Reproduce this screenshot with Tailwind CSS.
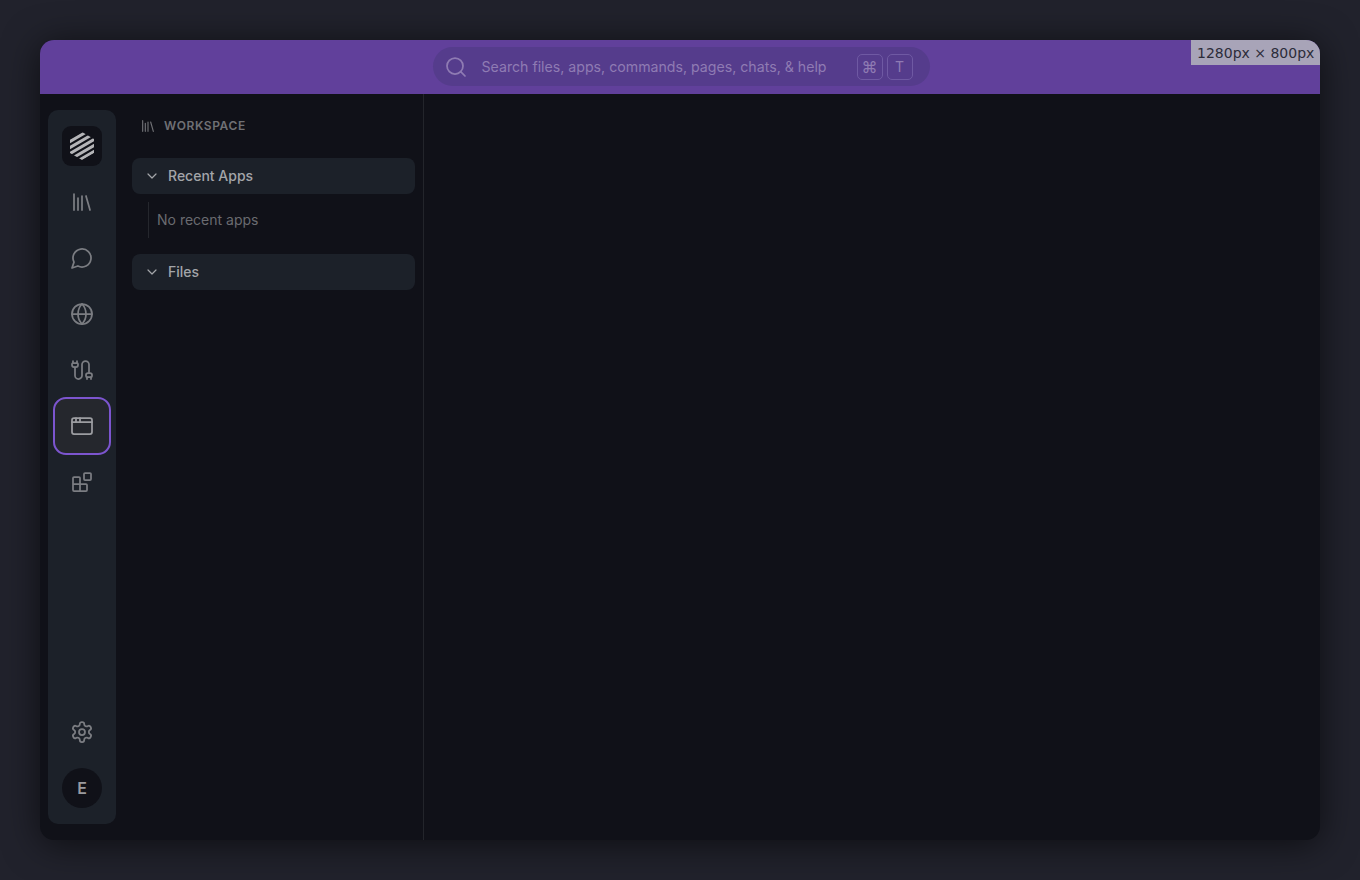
<!DOCTYPE html>
<html lang="en">
<head>
  <meta charset="UTF-8" />
  <title>Workspace</title>
  <script src="https://cdn.jsdelivr.net/npm/@tailwindcss/browser@4"></script>
</head>
<body class="bg-[#21222c] font-['Inter',sans-serif] h-[880px] overflow-hidden">

<div class="p-10">
  <!-- Window -->
  <div class="relative w-[1280px] h-[800px] rounded-[14px] overflow-hidden bg-[#101118] shadow-[0_4px_36px_rgba(0,0,0,0.6)] flex flex-col">

    <!-- Size badge -->
    <div class="absolute top-0 right-0 h-[25px] w-[129px] bg-[#a8a4b8] text-[#2c2c3a] font-['DejaVu_Sans',sans-serif] text-[14px] leading-[26px] pl-[6px] whitespace-nowrap">1280px × 800px</div>

    <!-- Top bar -->
    <header class="h-[54px] shrink-0 bg-[#61409b] flex justify-center pt-[7px] pl-[2px]">
      <div class="w-[497px] h-[39px] rounded-full bg-[#553c8c] flex items-center pl-[11px] pr-[17px] text-[#8f7bb3]">
        <svg class="w-[24px] h-[24px] shrink-0" viewBox="0 0 24 24" fill="none" stroke="currentColor" stroke-width="1.75" stroke-linecap="round" stroke-linejoin="round"><circle cx="11" cy="11" r="8"/><path d="m21 21-4.3-4.3"/></svg>
        <span class="ml-[14px] text-[14.16px] whitespace-nowrap">Search files, apps, commands, pages, chats, &amp; help</span>
        <div class="ml-auto flex gap-[4px]">
          <span class="w-[26px] h-[26px] rounded-[5px] border border-[#6f59a3] flex items-center justify-center text-[16px]">⌘</span>
          <span class="w-[26px] h-[26px] rounded-[5px] border border-[#6f59a3] flex items-center justify-center text-[14px]">T</span>
        </div>
      </div>
    </header>

    <div class="flex-1 flex min-h-0">
      <!-- Icon rail -->
      <div class="pl-2 pt-4 pb-4 shrink-0">
        <nav class="w-[68px] h-full rounded-[10px] bg-[#1c2129] flex flex-col items-center pt-4 pb-4 text-[#7b7d82]">
          <div class="w-10 h-10 rounded-[9px] bg-[#101118] flex items-center justify-center mb-[16px]">
            <svg class="w-[24px] h-[28px]" viewBox="0 0 24 28" fill="none">
              <clipPath id="hex"><path d="M12 0 24 7v14l-12 7L0 21V7Z"/></clipPath>
              <g clip-path="url(#hex)" stroke="#b4b4b7" stroke-width="3">
                <path d="M-2 4.6 26-11.6M-2 10.6 26-5.6M-2 16.6 26 .4M-2 22.6 26 6.4M-2 28.6 26 12.4M-2 34.6 26 18.4"/>
              </g>
            </svg>
          </div>
          <!-- library -->
          <div class="w-14 h-10 flex items-center justify-center mb-[16px]">
            <svg class="w-[24px] h-[24px]" viewBox="0 0 24 24" fill="none" stroke="currentColor" stroke-width="1.75" stroke-linecap="round" stroke-linejoin="round"><path d="m16 6 4 14M12 6v14M8 8v12M4 4v16"/></svg>
          </div>
          <!-- chat -->
          <div class="w-14 h-10 flex items-center justify-center mb-[16px]">
            <svg class="w-[24px] h-[24px]" viewBox="0 0 24 24" fill="none" stroke="currentColor" stroke-width="1.75" stroke-linecap="round" stroke-linejoin="round"><path d="M7.9 20A9 9 0 1 0 4 16.1L2 22Z"/></svg>
          </div>
          <!-- globe -->
          <div class="w-14 h-10 flex items-center justify-center mb-[16px]">
            <svg class="w-[24px] h-[24px]" viewBox="0 0 24 24" fill="none" stroke="currentColor" stroke-width="1.75" stroke-linecap="round" stroke-linejoin="round"><circle cx="12" cy="12" r="10"/><path d="M12 2a14.5 14.5 0 0 0 0 20 14.5 14.5 0 0 0 0-20M2 12h20"/></svg>
          </div>
          <!-- cable -->
          <div class="w-14 h-10 flex items-center justify-center mb-[7px]">
            <svg class="w-[24px] h-[24px]" viewBox="0 0 24 24" fill="none" stroke="currentColor" stroke-width="1.75" stroke-linecap="round" stroke-linejoin="round"><path d="M17 21v-2a1 1 0 0 1-1-1v-1a2 2 0 0 1 2-2h2a2 2 0 0 1 2 2v1a1 1 0 0 1-1 1"/><path d="M19 15V6.5a1 1 0 0 0-7 0v11a1 1 0 0 1-7 0V9"/><path d="M21 21v-2h-4"/><path d="M3 5h4V3"/><path d="M7 5a1 1 0 0 1 1 1v1a2 2 0 0 1-2 2H4a2 2 0 0 1-2-2V6a1 1 0 0 1 1-1V3"/></svg>
          </div>
          <!-- apps, active -->
          <div class="w-[58px] h-[58px] shrink-0 rounded-[13px] border-2 border-[#7c55cf] bg-[#25272d] flex items-center justify-center mb-[7px] text-[#9c9da1]">
            <svg class="w-[24px] h-[24px]" viewBox="0 0 24 24" fill="none" stroke="currentColor" stroke-width="1.75" stroke-linecap="round" stroke-linejoin="round"><rect x="2" y="4" width="20" height="16" rx="2"/><path d="M10 4v4M2 8h20M6 4v4"/></svg>
          </div>
          <!-- blocks -->
          <div class="w-14 h-10 flex items-center justify-center">
            <svg class="w-[24px] h-[24px]" viewBox="0 0 24 24" fill="none" stroke="currentColor" stroke-width="1.75" stroke-linecap="round" stroke-linejoin="round"><rect x="14" y="3" width="7" height="7" rx="1"/><path d="M10 21V8a1 1 0 0 0-1-1H4a1 1 0 0 0-1 1v12a1 1 0 0 0 1 1h12a1 1 0 0 0 1-1v-5a1 1 0 0 0-1-1H3"/></svg>
          </div>

          <!-- settings -->
          <div class="mt-auto w-14 h-10 flex items-center justify-center mb-[16px]">
            <svg class="w-[24px] h-[24px]" viewBox="0 0 24 24" fill="none" stroke="currentColor" stroke-width="1.75" stroke-linecap="round" stroke-linejoin="round"><path d="M12.22 2h-.44a2 2 0 0 0-2 2v.18a2 2 0 0 1-1 1.73l-.43.25a2 2 0 0 1-2 0l-.15-.08a2 2 0 0 0-2.73.73l-.22.38a2 2 0 0 0 .73 2.73l.15.1a2 2 0 0 1 1 1.72v.51a2 2 0 0 1-1 1.74l-.15.09a2 2 0 0 0-.73 2.73l.22.38a2 2 0 0 0 2.73.73l.15-.08a2 2 0 0 1 2 0l.43.25a2 2 0 0 1 1 1.73V20a2 2 0 0 0 2 2h.44a2 2 0 0 0 2-2v-.18a2 2 0 0 1 1-1.73l.43-.25a2 2 0 0 1 2 0l.15.08a2 2 0 0 0 2.73-.73l.22-.39a2 2 0 0 0-.73-2.73l-.15-.08a2 2 0 0 1-1-1.74v-.5a2 2 0 0 1 1-1.74l.15-.09a2 2 0 0 0 .73-2.73l-.22-.38a2 2 0 0 0-2.73-.73l-.15.08a2 2 0 0 1-2 0l-.43-.25a2 2 0 0 1-1-1.73V4a2 2 0 0 0-2-2z"/><circle cx="12" cy="12" r="3"/></svg>
          </div>
          <div class="w-10 h-10 rounded-full bg-[#101118] flex items-center justify-center text-[#9a9a9e] text-[16px] font-semibold">E</div>
        </nav>
      </div>

      <!-- Sidebar -->
      <aside class="w-[308px] shrink-0 border-r border-[#23252b] pl-4 pr-2 pt-4">
        <div class="h-[32px] mb-4 flex items-center pl-[9px] text-[#6f7074]">
          <svg class="w-[16px] h-[16px] shrink-0 -ml-[1px]" viewBox="0 0 24 24" fill="none" stroke="currentColor" stroke-width="1.75" stroke-linecap="round" stroke-linejoin="round"><path d="m16 6 4 14M12 6v14M8 8v12M4 4v16"/></svg>
          <span class="ml-[8px] text-[12px] font-semibold tracking-[0.6px]">WORKSPACE</span>
        </div>
        <div class="h-[36px] rounded-lg bg-[#1c2129] flex items-center pl-[14px] text-[#a3a5a9]">
          <svg class="w-[12px] h-[12px]" viewBox="0 0 24 24" fill="none" stroke="currentColor" stroke-width="2.4" stroke-linecap="round" stroke-linejoin="round"><path d="m4 8 8 8 8-8"/></svg>
          <span class="ml-[10px] text-[14px] font-medium leading-[20px] pb-[1px]">Recent Apps</span>
        </div>
        <div class="ml-4 mt-2 h-9 border-l border-[#25272d] flex items-center pl-2 text-[14px] text-[#6a6b70] pb-[2px]">No recent apps</div>
        <div class="mt-4 h-[36px] rounded-lg bg-[#1c2129] flex items-center pl-[14px] text-[#a3a5a9]">
          <svg class="w-[12px] h-[12px]" viewBox="0 0 24 24" fill="none" stroke="currentColor" stroke-width="2.4" stroke-linecap="round" stroke-linejoin="round"><path d="m4 8 8 8 8-8"/></svg>
          <span class="ml-[10px] text-[14px] font-medium leading-[20px] pb-[1px]">Files</span>
        </div>
      </aside>

      <main class="flex-1"></main>
    </div>
  </div>
</div>

</body>
</html>
